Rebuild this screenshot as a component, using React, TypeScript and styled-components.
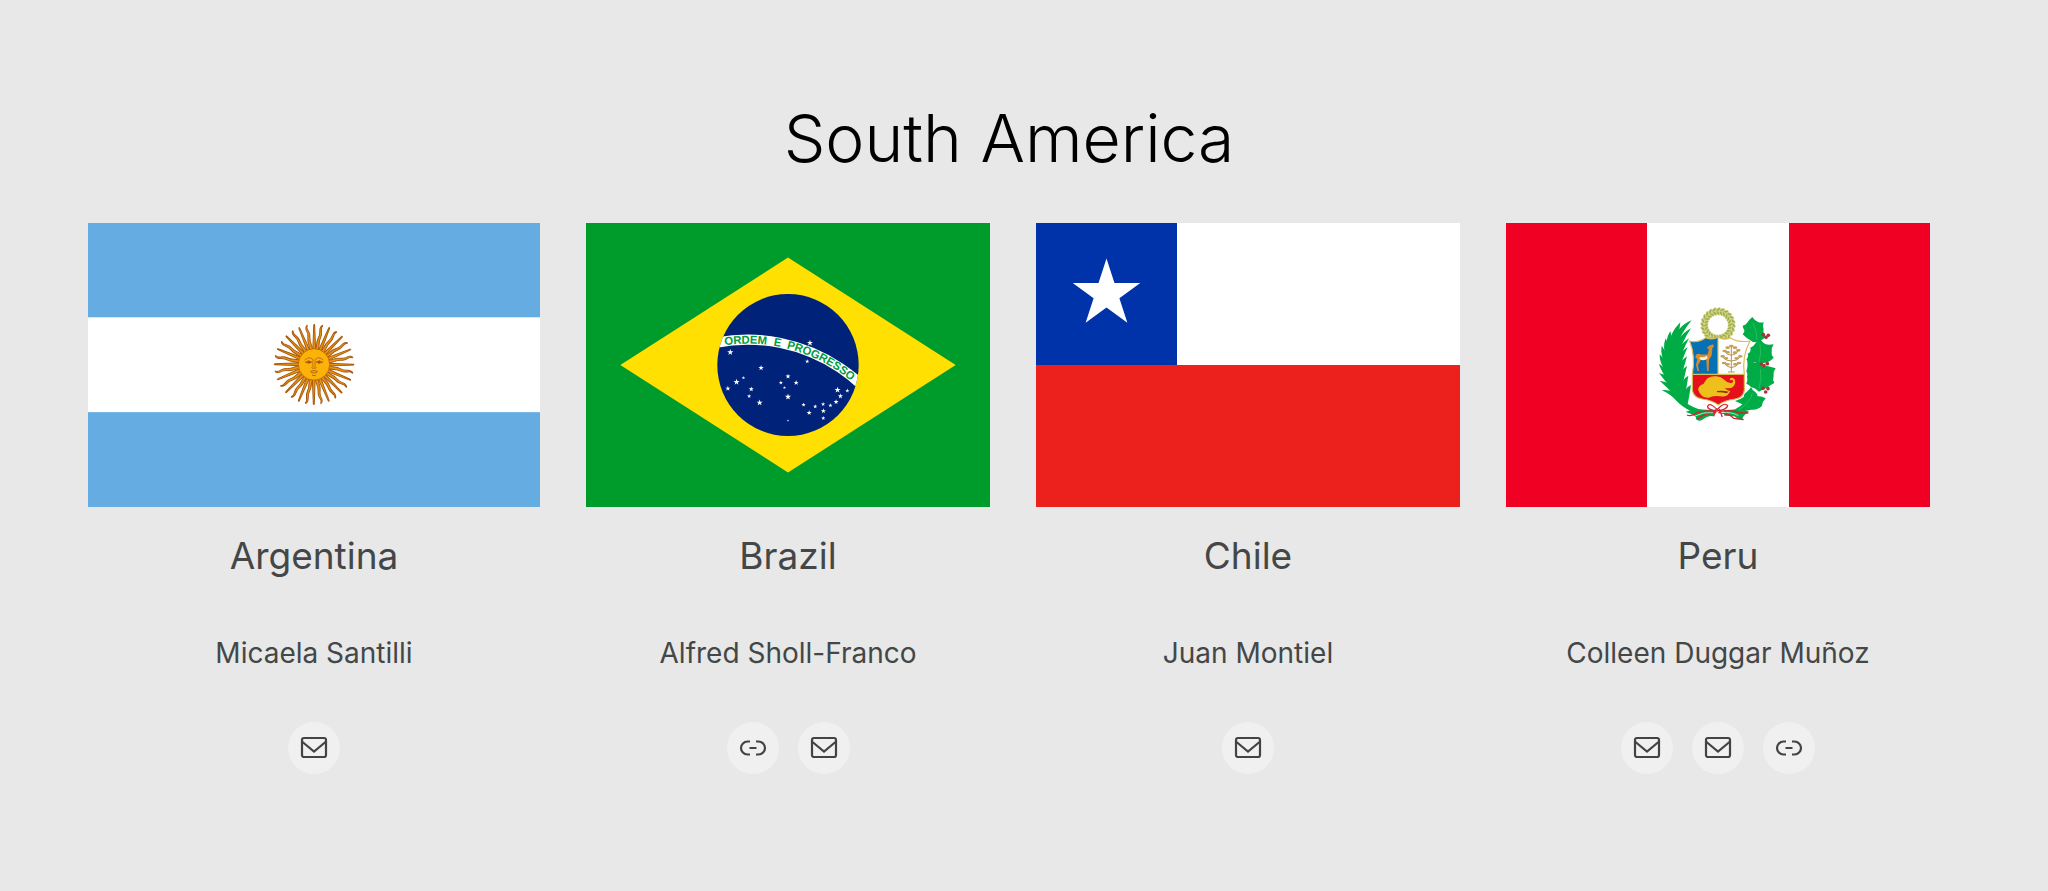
import React from 'react';
import styled, { createGlobalStyle } from 'styled-components';

const GlobalStyle = createGlobalStyle`
  * { box-sizing: border-box; }
  body {
    margin: 0;
    background: #e8e8e8;
    color: #434747;
    font-family: Inter, "Liberation Sans", sans-serif;
  }
`;

const Region = styled.section`
  min-height: 100vh;
  padding: 98px 118px 98px 88px;
`;

const RegionTitle = styled.h2`
  margin: 0 0 45px;
  color: #000;
  font-size: 66px;
  font-weight: 300;
  line-height: 80px;
  text-align: center;
`;

const Countries = styled.div`
  display: grid;
  grid-template-columns: 452fr 404fr 424fr 424fr;
  gap: 46px;
`;

const Country = styled.article`
  display: flex;
  flex-direction: column;
  align-items: center;
  text-align: center;
`;

const Flag = styled.svg`
  display: block;
  width: 100%;
  height: 284px;
`;

const CountryName = styled.h3`
  margin: 25px 0 0;
  font-size: 37px;
  font-weight: 400;
  line-height: 48px;
`;

const Contact = styled.p`
  margin: 54px 0 0;
  font-size: 28px;
  line-height: 38px;
`;

const Links = styled.div`
  display: flex;
  gap: 19px;
  margin-top: 50px;
`;

const IconLink = styled.a`
  display: flex;
  align-items: center;
  justify-content: center;
  width: 52px;
  height: 52px;
  border-radius: 50%;
  background: #f0f0f0;
  color: #434343;
`;

function MailIcon() {
  return (
    <svg width="28" height="28" viewBox="0 0 28 28" fill="none" stroke="currentColor" strokeWidth="2.200" aria-hidden="true">
      <rect x="2" y="4" width="24" height="19" rx="2" />
      <path d="M2.5 8 14 17.500 25.500 8" />
    </svg>
  );
}

function ChainIcon() {
  return (
    <svg width="28" height="28" viewBox="0 0 28 28" fill="none" stroke="currentColor" strokeWidth="2.200" aria-hidden="true">
      <path d="M11 7.500H8.500a6.500 6.500 0 0 0 0 13H11M17 7.500h2.500a6.500 6.500 0 0 1 0 13H17M10.500 14h7" />
    </svg>
  );
}

const star = (cx: number, cy: number, r: number) =>
  Array.from({ length: 10 }, (_, i) => {
    const radius = i % 2 ? r * 0.382 : r;
    const angle = (Math.PI / 5) * i - Math.PI / 2;
    return `${(cx + radius * Math.cos(angle)).toFixed(2)},${(cy + radius * Math.sin(angle)).toFixed(2)}`;
  }).join(' ');

const STRAIGHT_RAY =
  'm396.84 251.31 28.454 61.992s.49 1.185 1.28.859c.79-.327.299-1.512.299-1.512l-23.715-63.956z';
const WAVY_RAY =
  'm402.480 272.810c-.347 9.428 5.452 14.613 4.694 23.032-.757 8.42 3.867 13.18 4.94 16.454 1.073 3.274-1.16 5.232-.198 5.698.963.466 3.07-2.12 2.383-6.775-.687-4.655-4.22-6.037-3.39-16.32.83-10.283-4.206-12.678-2.98-22.058z';

function ArgentinaFlag() {
  const turns = Array.from({ length: 16 }, (_, i) => i * 22.5);
  return (
    <Flag viewBox="0 0 800 500" preserveAspectRatio="none" role="img" aria-label="Flag of Argentina">
      <rect width="800" height="500" fill="#65ace3" />
      <rect y="166" width="800" height="167" fill="#fff" />
      <g fill="#e8960f" stroke="#a8570f" strokeWidth="1.700">
        {turns.map((t) => (
          <g key={t} transform={`rotate(${t} 400 249)`}>
            <path d={STRAIGHT_RAY} />
            <path d={WAVY_RAY} />
          </g>
        ))}
      </g>
      <circle cx="400" cy="249" r="27.800" fill="#fdb20a" stroke="#b8660c" strokeWidth="1.600" />
      <g fill="none" stroke="#a8570f" strokeWidth="1.500" strokeLinecap="round">
        <path d="M384 241q7-7 14-1v13M416 241q-7-7-14-1v13" strokeWidth="1.200" />
        <path d="M385 245q6-5 11 0-5 4-11 0M415 245q-6-5-11 0 5 4 11 0" />
        <circle cx="391" cy="245" r="1.600" fill="#7a3604" />
        <circle cx="409" cy="245" r="1.600" fill="#7a3604" />
        <path d="M396 255q2 2 4 0 2 2 4 0M394 261q6-3 12 0M395 263q5 3 10 0M397 268q3 2 6 0" />
      </g>
    </Flag>
  );
}

const BRAZIL_STARS: [number, number, number][] = [
  [-600, -132, 34], [-535, 177, 34], [-625, 243, 28], [-463, 132, 19], [-382, 250, 28],
  [-404, 323, 23], [228, -228, 34], [515, 258, 34], [617, 265, 23], [545, 323, 28],
  [368, 477, 28], [367, 551, 23], [441, 419, 23], [500, 382, 28], [365, 405, 23],
  [-280, 30, 30], [200, -37, 23], [0, 330, 34], [85, 184, 28], [0, 118, 28],
  [-74, 184, 23], [-37, 235, 18], [220, 495, 28], [283, 430, 23], [162, 412, 23],
  [-295, 390, 34], [0, 575, 13],
];

function BrazilFlag() {
  return (
    <Flag viewBox="-2100 -1470 4200 2940" preserveAspectRatio="none" role="img" aria-label="Flag of Brazil">
      <defs>
        <clipPath id="globe">
          <circle r="735" />
        </clipPath>
        <path id="motto" d="M-2112 1470a1692 1692 0 0 1 3384 0" />
      </defs>
      <rect x="-2100" y="-1470" width="4200" height="2940" fill="#009c2b" />
      <path d="M-1743 0 0 1113 1743 0 0-1113z" fill="#ffe000" />
      <circle r="735" fill="#002278" />
      <path
        d="M-2205 1470a1785 1785 0 0 1 3570 0h-105a1680 1680 0 1 0-3360 0z"
        fill="#fff"
        clipPath="url(#globe)"
      />
      <g fill="#009c3b" fontSize="118" fontWeight="700" fontFamily="'Liberation Sans', sans-serif">
        <text><textPath href="#motto" startOffset="2418">ORDEM</textPath></text>
        <text><textPath href="#motto" startOffset="2925">E</textPath></text>
        <text><textPath href="#motto" startOffset="3066">PROGRESSO</textPath></text>
      </g>
      <g fill="#fff">
        {BRAZIL_STARS.map(([x, y, r]) => (
          <polygon key={`${x},${y}`} points={star(x, y, r)} />
        ))}
      </g>
    </Flag>
  );
}

function ChileFlag() {
  return (
    <Flag viewBox="0 0 424 284" preserveAspectRatio="none" role="img" aria-label="Flag of Chile">
      <rect width="424" height="142" fill="#fff" />
      <rect y="142" width="424" height="142" fill="#ec211e" />
      <rect width="141" height="142" fill="#0033a9" />
      <polygon points={star(70.5, 71, 35.5)} fill="#fff" />
    </Flag>
  );
}

const PALM_LEAVES = [
  'M100 322Q72 294 50 286Q76 280 112 308Z', 'M90 304Q60 270 44 258Q74 258 104 292Z',
  'M82 284Q54 250 42 234Q70 240 98 274Z', 'M74 264Q46 226 42 206Q66 222 92 256Z',
  'M70 244Q42 204 44 178Q64 198 88 236Z', 'M66 220Q44 180 50 152Q66 176 86 210Z',
  'M66 196Q50 158 62 130Q72 154 86 190Z', 'M66 176Q58 136 76 108Q84 138 86 176Z',
  'M68 162Q74 112 106 82Q102 120 88 168Z', 'M74 150Q98 92 140 76Q106 116 90 166Z',
  'M76 184Q96 122 138 100Q112 138 94 194Z', 'M76 208Q98 150 132 130Q112 168 94 218Z',
  'M78 230Q98 174 128 156Q112 192 96 242Z', 'M82 254Q100 200 126 184Q116 220 102 266Z',
  'M90 276Q102 228 126 212Q118 248 108 288Z', 'M98 298Q108 252 130 242Q126 272 118 308Z',
  'M110 318Q114 280 138 270Q134 298 128 328Z',
];

const BERRIES = [
  [355, 119], [363, 127], [370, 121], [349, 207], [357, 212], [367, 206],
  [354, 280], [362, 291], [369, 281],
];

function PeruFlag() {
  const wreath = Array.from({ length: 24 }, (_, i) => i * 15);
  return (
    <Flag viewBox="0 0 424 284" preserveAspectRatio="none" role="img" aria-label="Flag of Peru">
      <rect width="424" height="284" fill="#f00022" />
      <rect x="141" width="142" height="284" fill="#fff" />
      <g transform="translate(139 72) scale(.3333)">
        <g fill="#00ac45">
          <path d="M66 150Q58 236 98 300Q136 346 206 350V364Q130 360 90 312Q44 240 66 150Z" />
          <path d="M70 150Q92 180 88 230Q100 280 130 320L110 322Q74 280 68 230Z" />
          {PALM_LEAVES.map((d) => (
            <path key={d} d={d} />
          ))}
          <path d="M122 350Q150 340 206 346V362Q184 362 170 376Q160 380 152 372Q160 364 122 350ZM236 346Q290 340 312 350Q296 358 292 372Q280 376 268 364L238 362Z" />
          <path d="M322 66Q328 76 338 80Q346 84 356 82Q352 92 356 102Q352 114 364 126Q348 138 332 142Q322 142 314 134Q304 130 293 118Q300 112 298 106Q294 100 293 92Q302 90 306 84Q312 74 322 66Z" />
          <path d="M345 130Q352 144 362 148Q372 150 386 148Q378 160 380 170Q378 180 386 188Q374 202 356 204Q342 212 332 202Q320 206 304 194Q312 184 308 176Q320 170 316 158Q328 152 332 144Q338 138 345 130Z" />
          <path d="M306 192Q318 196 328 204Q336 200 344 204Q350 212 358 216Q364 212 370 214L392 220Q384 230 386 242Q382 254 388 264Q376 270 366 278Q352 284 342 290Q330 278 318 276Q312 268 304 266Q310 256 306 246Q310 238 304 228Q310 216 306 192Z" />
          <path d="M318 276Q322 286 330 290Q338 296 338 304Q348 302 362 310Q352 320 350 334Q338 346 318 344Q300 346 280 354L260 348Q282 338 292 328L270 318Q286 314 296 306Q298 294 308 288Q314 284 318 276Z" />
        </g>
        <path d="M324 84Q336 110 336 134M345 148Q350 178 342 202M346 222Q352 250 342 280M322 294Q318 322 282 344" fill="none" stroke="#3cc470" strokeWidth="2" />
        <g fill="#a5343c">
          {BERRIES.map(([x, y]) => (
            <circle key={`${x},${y}`} cx={x} cy={y} r="5.500" />
          ))}
        </g>
        <circle cx="219" cy="90" r="41" fill="none" stroke="#c0c878" strokeWidth="18" />
        <g fill="#a2ad48" stroke="#e4e6a8" strokeWidth="1.500">
          {wreath.map((a) => (
            <g key={a} transform={`rotate(${a} 219 90)`}>
              <ellipse cx="219" cy="44" rx="4" ry="9" transform="rotate(50 219 44)" />
              <ellipse cx="219" cy="54" rx="4" ry="8" transform="rotate(-40 219 54)" />
            </g>
          ))}
        </g>
        <path d="M134 138Q160 144 182 128Q204 136 219 126V238H142Q152 184 134 138Z" fill="#0670b5" />
        <path d="M219 126Q236 138 256 128Q280 144 315 138Q290 184 298 238H219Z" fill="#fff" />
        <path d="M142 238H298V286Q296 308 270 312Q238 316 220 330Q202 316 172 312Q146 308 142 286Z" fill="#e5101b" />
        <path
          d="M134 138Q160 144 182 128Q204 136 219 126Q236 138 256 128Q280 144 315 138Q290 184 298 238V286Q296 308 270 312Q238 316 220 330Q202 316 172 312Q146 308 142 286V238Q152 184 134 138ZM219 126V238M142 238H298"
          fill="none"
          stroke="#d8bd5d"
          strokeWidth="3.500"
        />
        <path
          d="M198 150l-6 2-7 8 7 2-4 16q-14 2-28-2-9 0-9 12l6 4-4 18 4 18h5l-3-17 9-17 16 1 2 33h5l1-34q10-10 9-20l1-14 5-6-3-6z"
          fill="#d98a2b"
        />
        <path d="M164 192q12 8 24-2l-2-8q-10 6-22 4z" fill="#fff0d4" />
        <g stroke="#b7924b" strokeWidth="3" fill="none">
          <path d="M259 231V150M259 218q-14-2-20-12M259 218q14-2 22-12M259 198q-18 0-26-12M259 198q18 0 26-12M259 180q-14 0-20-13M259 180q14 0 20-13M249 231h20" />
        </g>
        <g fill="#c2a15b">
          {[
            [259, 153], [248, 158], [270, 158], [239, 168], [280, 166], [248, 172], [270, 173],
            [233, 184], [286, 184], [243, 190], [275, 190], [237, 204], [282, 204], [248, 208], [271, 208],
          ].map(([x, y]) => (
            <ellipse key={`${x},${y}`} cx={x} cy={y} rx="7" ry="4" />
          ))}
        </g>
        <path
          d="M160 286Q158 272 176 266Q186 244 208 244Q224 242 238 254Q248 266 260 264Q268 260 262 254Q256 258 254 252Q262 244 270 254Q274 270 260 278Q248 282 238 278Q250 288 256 288Q248 308 226 304Q204 300 192 308Q168 310 160 286Z"
          fill="#eec01c"
        />
        <path d="M216 288q18-2 36 2l-8 5q-14-5-28-3z" fill="#8c3413" />
        <g fill="none" stroke="#d8202d" strokeWidth="4">
          <path d="M216 344Q194 320 188 334Q186 344 216 348Q246 344 248 332Q240 320 216 344" />
          <path d="M210 349Q170 344 144 360Q134 364 126 360M214 353Q180 354 158 371M222 349Q266 344 282 354L310 354M220 353Q256 356 266 370L296 374M214 340L206 364M222 340L232 366" />
        </g>
        <path d="M212 342Q196 328 192 336M222 342Q238 326 244 332M204 353Q176 350 150 363M230 353Q260 350 280 362" fill="none" stroke="#fff" strokeWidth="2" />
      </g>
    </Flag>
  );
}

type LinkKind = 'mail' | 'web';

const COUNTRIES: { name: string; contact: string; flag: () => React.JSX.Element; links: LinkKind[] }[] = [
  { name: 'Argentina', contact: 'Micaela Santilli', flag: ArgentinaFlag, links: ['mail'] },
  { name: 'Brazil', contact: 'Alfred Sholl-Franco', flag: BrazilFlag, links: ['web', 'mail'] },
  { name: 'Chile', contact: 'Juan Montiel', flag: ChileFlag, links: ['mail'] },
  { name: 'Peru', contact: 'Colleen Duggar Muñoz', flag: PeruFlag, links: ['mail', 'mail', 'web'] },
];

export default function App() {
  return (
    <>
      <GlobalStyle />
      <Region>
        <RegionTitle>South America</RegionTitle>
        <Countries>
          {COUNTRIES.map(({ name, contact, flag: CountryFlag, links }) => (
            <Country key={name}>
              <CountryFlag />
              <CountryName>{name}</CountryName>
              <Contact>{contact}</Contact>
              <Links>
                {links.map((kind, i) => (
                  <IconLink key={i} href="#" aria-label={`${kind === 'mail' ? 'Email' : 'Website of'} ${contact}`}>
                    {kind === 'mail' ? <MailIcon /> : <ChainIcon />}
                  </IconLink>
                ))}
              </Links>
            </Country>
          ))}
        </Countries>
      </Region>
    </>
  );
}
